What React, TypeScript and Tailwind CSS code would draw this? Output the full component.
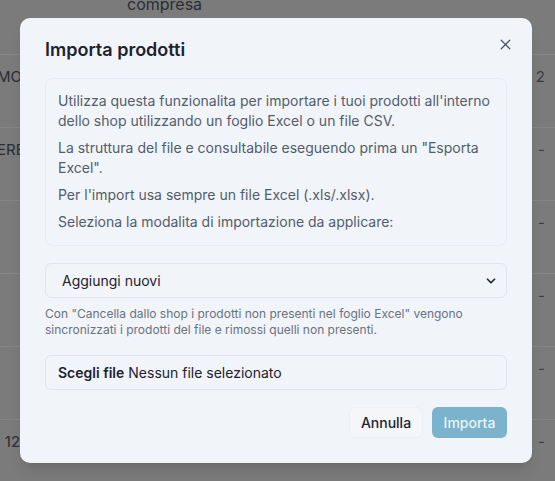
import { X, ChevronDown } from "lucide-react";

const rows = [
  { left: "MOR", right: "2" },
  { left: "ERE", right: "-" },
  { left: "", right: "-" },
  { left: "", right: "-" },
  { left: "", right: "-" },
  { left: "l 12", right: "-" },
];

export default function App() {
  return (
    <div
      className="relative w-[555px] h-[481px] overflow-hidden bg-[#7b7b7b]"
      style={{ fontFamily: "Inter, 'Noto Sans', sans-serif" }}
    >
      {/* dimmed page behind the dialog */}
      <div className="flex flex-col text-[#2a2d33]">
        <div className="h-[58px] border-b border-[#868686] pl-[127px] text-[16px] leading-[14px] -mt-[3px]">
          compresa
        </div>
        {rows.map((r, i) => (
          <div
            key={i}
            className="h-[73px] border-b border-[#868686] flex items-start justify-between pt-[11px] text-[15px]"
          >
            <span className="-ml-[3px]">{r.left}</span>
            <span className="mr-[10px] text-[#3a3d43]">{r.right}</span>
          </div>
        ))}
      </div>

      {/* dialog */}
      <div className="absolute left-[20px] top-[18px] w-[512px] h-[445px] rounded-[10px] bg-[#f1f4f9] shadow-lg px-[25px] pt-[20px]">
        <button className="absolute right-[18px] top-[18px] text-[#4b5563]">
          <X size={17} strokeWidth={1.8} />
        </button>
        <h2 className="text-[18px] leading-[24px] font-semibold text-[#1c2230]">Importa prodotti</h2>

        <div className="mt-[16px] rounded-[8px] border border-[#e8ecf2] px-[12px] pt-[12px] pb-[13px] text-[14px] leading-[20px] text-[#525d6d] flex flex-col gap-[7px]">
          <p>
            Utilizza questa funzionalita per importare i tuoi prodotti all'interno dello shop utilizzando un foglio Excel o un file CSV.
          </p>
          <p>La struttura del file e consultabile eseguendo prima un "Esporta Excel".</p>
          <p>Per l'import usa sempre un file Excel (.xls/.xlsx).</p>
          <p>Seleziona la modalita di importazione da applicare:</p>
        </div>

        <div className="mt-[17px] h-[35px] rounded-[6px] border border-[#e1e6ed] flex items-center justify-between pl-[16px] pr-[8px] text-[14px] text-[#1c2230]">
          <span>Aggiungi nuovi</span>
          <ChevronDown size={14} strokeWidth={3} className="text-[#1f2937]" />
        </div>
        <p className="mt-[8px] text-[12px] leading-[16px] text-[#6b7280]">
          Con "Cancella dallo shop i prodotti non presenti nel foglio Excel" vengono sincronizzati i prodotti del file e rimossi quelli non presenti.
        </p>

        <div className="mt-[17px] h-[35px] rounded-[6px] border border-[#e1e6ed] flex items-center pl-[12px] text-[14px] text-[#1c2230]">
          <span className="font-semibold mr-[4px]">Scegli file</span>
          <span>Nessun file selezionato</span>
        </div>

        <div className="mt-[17px] flex justify-end gap-[9px]">
          <button className="w-[74px] h-[31px] rounded-[6px] border border-[#eceff4] bg-[#f4f6fa] text-[14px] font-medium text-[#1c2230]">
            Annulla
          </button>
          <button className="w-[75px] h-[31px] rounded-[6px] bg-[#7ab3cb] text-[14px] font-medium text-[#eaf3f8]">
            Importa
          </button>
        </div>
      </div>
    </div>
  );
}
